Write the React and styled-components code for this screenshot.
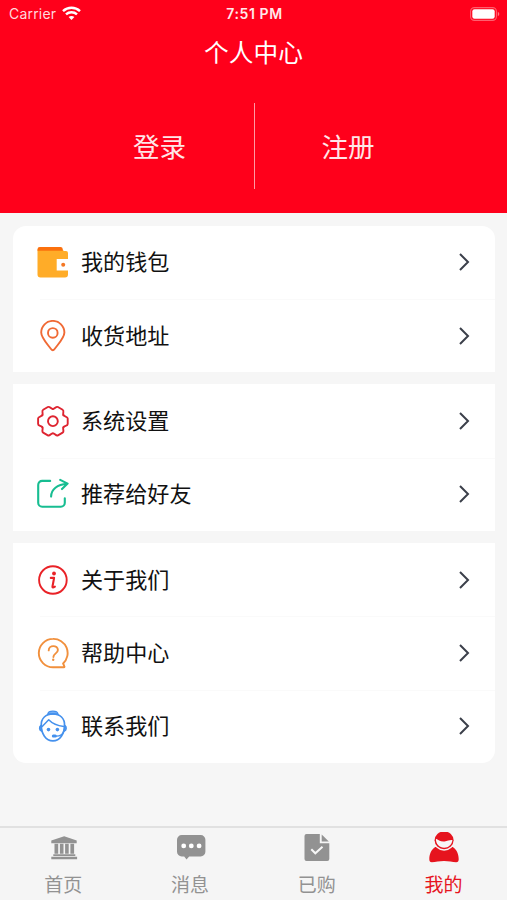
import React from 'react';
import styled, { createGlobalStyle, css } from 'styled-components';

const GlobalStyle = createGlobalStyle`
  * {
    box-sizing: border-box;
  }

  body {
    margin: 0;
    background: #f6f6f6;
    font-family: 'Noto Sans CJK SC', sans-serif;
  }
`;

const Screen = styled.div`
  display: flex;
  flex-direction: column;
  width: 507px;
  height: 900px;
  overflow: hidden;
  background: #f6f6f6;
`;

const Header = styled.header`
  flex: none;
  height: 213px;
  color: #fff;
  background: #ff001b;
`;

const StatusBar = styled.div`
  display: grid;
  grid-template-columns: 1fr auto 1fr;
  align-items: center;
  height: 27px;
  padding: 0 7px 0 9px;
  font-family: Inter, sans-serif;
  font-size: 14px;
  line-height: 27px;
`;

const Carrier = styled.div`
  display: flex;
  align-items: center;
  gap: 6px;
  letter-spacing: 0.2px;
  color: #ffd9dd;

  svg {
    margin-bottom: 1px;
  }
`;

const Clock = styled.div`
  font-size: 14px;
  font-weight: 600;
  letter-spacing: 0.6px;
  color: #ffe9eb;
`;

const Battery = styled.div`
  display: flex;
  justify-content: flex-end;
`;

const Title = styled.h1`
  height: 48px;
  margin: 0;
  font-size: 24.7px;
  font-weight: 400;
  line-height: 48px;
  text-align: center;
`;

const AuthRow = styled.div`
  display: flex;
  justify-content: center;
  height: 86px;
  margin-top: 28px;
`;

const AuthLink = styled.a`
  width: 188px;
  font-size: 26.5px;
  line-height: 86px;
  text-align: center;
  color: #ffe6e8;

  & + & {
    border-left: 1px solid #ff9aa4;
  }
`;

const Content = styled.main`
  display: flex;
  flex: 1;
  flex-direction: column;
  gap: 12px;
  padding: 12.8px 12px 0 13px;
`;

const Card = styled.section`
  background: #fff;

  &:first-child {
    border-radius: 13px 13px 0 0;
  }

  &:last-child {
    border-radius: 0 0 13px 13px;
  }
`;

const Row = styled.div`
  display: flex;
  align-items: center;
  height: 73.3px;
  padding: 0 25px 0 24px;

  & + & {
    background: linear-gradient(#fafafa, #fafafa) 27px 0 / 100% 1px no-repeat;
  }

  svg {
    flex: none;
  }
`;

const Label = styled.span`
  flex: 1;
  margin-left: 12px;
  padding-bottom: 4px;
  font-size: 22.1px;
  line-height: 32px;
  color: #111;
`;

const TabBar = styled.nav`
  display: grid;
  flex: none;
  grid-template-columns: repeat(4, 1fr);
  height: 74px;
  border-top: 2px solid #e1e1e1;
  background: #f5f5f5;
`;

const Tab = styled.a`
  display: flex;
  flex-direction: column;
  align-items: center;
  padding-top: 4px;
  font-size: 19px;
  line-height: 26px;
  color: #929292;

  span {
    margin-top: 7px;
  }

  ${props =>
    props.$active &&
    css`
      color: #e6141e;
    `};
`;

const WifiIcon = () => (
  <svg width="19" height="15" viewBox="0 0 19 15" fill="none" stroke="#fff" strokeWidth="2.5">
    <path d="M1 5.1C5.800.7 13.200.7 18 5.100" />
    <path d="M4 8.400C7.100 5.600 11.900 5.600 15 8.400" />
    <path d="M6.600 11.100C8.300 9.500 10.700 9.500 12.400 11.100L9.500 14.100z" fill="#fff" stroke="none" />
  </svg>
);

const BatteryIcon = () => (
  <svg width="30" height="14" viewBox="0 0 30 14">
    <rect x=".6" y=".6" width="25.800" height="12.800" rx="3.800" fill="none" stroke="#ff5f6e" strokeWidth="1.100" />
    <rect x="2.300" y="2.300" width="22.400" height="9.400" rx="2.200" fill="#fff" />
    <path d="M27.800 4.800c2 .8 2 3.600 0 4.400z" fill="#ff7885" />
  </svg>
);

const LineIcon = ({ children, color }) => (
  <svg
    width="32"
    height="32"
    viewBox="0 0 32 32"
    fill="none"
    stroke={color}
    strokeWidth="1.9"
    strokeLinecap="round"
    strokeLinejoin="round"
  >
    {children}
  </svg>
);

const WalletIcon = () => (
  <svg width="32" height="32" viewBox="0 0 32 32">
    <path d="M.5 3.500h24.500c1 0 1.500.6 1.500 1.500h2.500a2 2 0 0 1 2 2v21.500a3 3 0 0 1-3 3H3.500a3 3 0 0 1-3-3z" fill="#ffac28" />
    <path d="M3 .9h20.500a2.200 2.200 0 0 1 2.200 2.200v1.700H.5V3.300A2.400 2.400 0 0 1 3 .9z" fill="#fb700d" />
    <rect x="19.700" y="13" width="12.300" height="11.500" fill="#fff" />
    <circle cx="26.200" cy="18.700" r="2" fill="#f47724" />
  </svg>
);

const PinIcon = () => (
  <LineIcon color="#f06a35">
    <path d="M15.800 30.200c-.8 0-1.300-.5-1.800-1.200C8.800 22.200 4.200 17.500 4.200 12.500a11.600 11.600 0 0 1 23.200 0c0 5-4.600 9.700-9.800 16.500-.5.700-1 1.200-1.800 1.200z" />
    <circle cx="15.800" cy="12.900" r="4.800" />
  </LineIcon>
);

// one tooth, repeated around the hub
const GearIcon = () => (
  <LineIcon color="#de2430">
    <g transform="translate(15.9 16.2)">
      {[0, 60, 120, 180, 240, 300].map(angle => (
        <path
          key={angle}
          d="M10.500-6.100C11.600-4.200 14.800-5 14.800-2.700V2.700C14.800 5 11.600 4.200 10.500 6.100"
          transform={`rotate(${angle})`}
        />
      ))}
      <circle r="4.900" />
    </g>
  </LineIcon>
);

const ShareIcon = () => (
  <LineIcon color="#17bd91">
    <path d="M13.200 2.900H5.200a4 4 0 0 0-4 4v17.900a4 4 0 0 0 4 4h18.600a4 4 0 0 0 4-4v-4.500" strokeWidth="2.100" />
    <path d="M14.100 18.600c0-7.300 6.200-12.100 16-12.900M23.200 1.900l7.400 3.700-5.600 5.500" strokeWidth="2.100" />
  </LineIcon>
);

const InfoIcon = () => (
  <LineIcon color="#e92227">
    <circle cx="15.900" cy="16" r="13.800" />
    <circle cx="17" cy="9.500" r="1.900" fill="#e92227" stroke="none" />
    <path d="M13.800 13.900h3.300l-1.600 8.600c-.2 1.200.7 1.200 2.400.2" strokeWidth="2.100" />
  </LineIcon>
);

const HelpIcon = () => (
  <LineIcon color="#f1903d">
    <path d="M16 1.900A14.200 14.200 0 1 0 16 30.300H26.800c.7 0 .8-.6.500-1.100l-1.200-2.700A14.200 14.200 0 0 0 16 1.900z" />
    <path d="M11.700 13.400c0-5.800 9.200-5.600 9.200-.3 0 3.200-4.500 3.400-4.500 6.900" strokeWidth="1.900" />
    <circle cx="16.200" cy="22.800" r="1.200" fill="#f1903d" stroke="none" />
  </LineIcon>
);

const ServiceIcon = () => (
  <LineIcon color="#4591ed">
    <path d="M10.800 4.100C11.400.2 20.300.2 21 4.100z" fill="#73aff5" strokeWidth="1.300" />
    <path d="M4.300 15.500C3.800 8.300 9 3.900 15.900 3.900S28 8.300 27.500 15.500c0 8-4.400 15.300-11.600 15.300S4.300 23.500 4.300 15.500z" strokeWidth="1.700" />
    <path d="M5.200 16.500 11.700 9.800c4.200 4.500 9.200 6.100 15 6.700" strokeWidth="1.500" />
    <path d="M3.800 15.500c-1.900 1.500-1.600 4.800.8 5.700zM28 15.500c1.900 1.500 1.600 4.800-.8 5.700z" fill="#73aff5" strokeWidth="1.400" />
    <path d="M26.800 21c-1 3.800-4.200 5.200-7.600 5.200" strokeWidth="1.200" />
    <rect x="14.800" y="24.500" width="5" height="3" rx="1.500" fill="#4591ed" stroke="none" />
    <circle cx="11.500" cy="19.600" r="1.800" fill="#4591ed" stroke="none" />
    <circle cx="20.400" cy="19.600" r="1.800" fill="#4591ed" stroke="none" />
  </LineIcon>
);

const Chevron = () => (
  <svg width="12" height="20" viewBox="0 0 12 20" fill="none" stroke="#3b3f4a" strokeWidth="2">
    <path d="m2 2 8 8-8 8" />
  </svg>
);

const HomeIcon = () => (
  <svg width="32" height="32" viewBox="0 0 32 32" fill="currentColor">
    <path d="M17.200 4.200 29.700 8.500v2.700H4.300V8.500z" />
    <path d="M7.500 11.800h3.700v9.900H7.500zM12.900 11.800h3.600v9.900h-3.600zM18.100 11.800h3.600v9.900h-3.600zM23.400 11.800h3.700v9.900h-3.700z" />
    <path d="M6.300 22.200h22v1.700h-22zM4.300 24.800h25.800v2.500H4.300z" />
  </svg>
);

const MessageIcon = () => (
  <svg width="32" height="32" viewBox="0 0 32 32">
    <path d="M7.700 3.100h19a4.700 4.700 0 0 1 4.700 4.700v11.900a4.700 4.700 0 0 1-4.700 4.700H15.200l-2.700 3-2.300-3H7.700a4.700 4.700 0 0 1-4.700-4.700V7.800a4.700 4.700 0 0 1 4.700-4.700z" fill="currentColor" />
    <g fill="#fff">
      <circle cx="9.700" cy="13.900" r="2.400" />
      <circle cx="17.300" cy="13.900" r="2.400" />
      <circle cx="25.100" cy="13.900" r="2.400" />
    </g>
  </svg>
);

const OrderIcon = () => (
  <svg width="32" height="32" viewBox="0 0 32 32">
    <path d="M5.500 2h13.300v9.300h9.500v15.600a2 2 0 0 1-2 2H5.500a2 2 0 0 1-2-2V4a2 2 0 0 1 2-2z" fill="currentColor" />
    <path d="M20.700 2.600v6.900h7.100z" fill="currentColor" />
    <path d="m10.300 17.300 4 4 7.200-6.600" fill="none" stroke="#f7f7f7" strokeWidth="2" />
  </svg>
);

const UserIcon = () => (
  <svg width="32" height="32" viewBox="0 0 32 32" fill="currentColor">
    <path d="M7.300 15.100C3.400 17.500 1.300 22 1.300 27.300c0 2 .8 2.900 2.500 2.900 3.700 0 7.600-1.200 12.200-1.200s8.500 1.200 12.200 1.200c1.700 0 2.500-.9 2.500-2.900 0-5.300-2.100-9.800-6-12.200z" />
    <ellipse cx="16.100" cy="8.700" rx="10.500" ry="10" fill="#f5f5f5" />
    <ellipse cx="16.100" cy="8.300" rx="9.500" ry="8.900" />
    <path d="M7.900 6.800c2.300 1.200 4.800 3.100 8.700 2.600 3-.4 5-1.700 7.800-1.400-.5 4.600-3.800 7.700-8.200 7.700-4.800 0-8.300-3.400-8.300-8.900z" fill="#f7f7f7" />
  </svg>
);

const groups = [
  [
    { label: '我的钱包', icon: WalletIcon },
    { label: '收货地址', icon: PinIcon },
  ],
  [
    { label: '系统设置', icon: GearIcon },
    { label: '推荐给好友', icon: ShareIcon },
  ],
  [
    { label: '关于我们', icon: InfoIcon },
    { label: '帮助中心', icon: HelpIcon },
    { label: '联系我们', icon: ServiceIcon },
  ],
];

const tabs = [
  { label: '首页', icon: HomeIcon },
  { label: '消息', icon: MessageIcon },
  { label: '已购', icon: OrderIcon },
  { label: '我的', icon: UserIcon, active: true },
];

export default function App() {
  return (
    <Screen>
      <GlobalStyle />
      <Header>
        <StatusBar>
          <Carrier>
            Carrier
            <WifiIcon />
          </Carrier>
          <Clock>7:51 PM</Clock>
          <Battery>
            <BatteryIcon />
          </Battery>
        </StatusBar>
        <Title>个人中心</Title>
        <AuthRow>
          <AuthLink>登录</AuthLink>
          <AuthLink>注册</AuthLink>
        </AuthRow>
      </Header>
      <Content>
        {groups.map(rows => (
          <Card key={rows[0].label}>
            {rows.map(({ label, icon: Icon }) => (
              <Row key={label}>
                <Icon />
                <Label>{label}</Label>
                <Chevron />
              </Row>
            ))}
          </Card>
        ))}
      </Content>
      <TabBar>
        {tabs.map(({ label, icon: Icon, active }) => (
          <Tab key={label} $active={active}>
            <Icon />
            <span>{label}</span>
          </Tab>
        ))}
      </TabBar>
    </Screen>
  );
}
